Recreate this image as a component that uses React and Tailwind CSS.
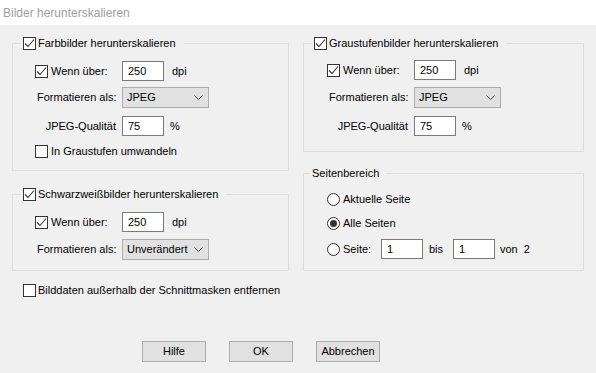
import React from 'react';

const Check = ({ checked }) => (
  <span className="w-[13px] h-[13px] border border-[#333333] bg-white flex items-center justify-center shrink-0">
    {checked && (
      <svg width="11" height="11" viewBox="0 0 11 11">
        <path d="M1 5.5 L4 8.5 L10 1.5" fill="none" stroke="#333333" strokeWidth="1.1" />
      </svg>
    )}
  </span>
);

const Radio = ({ checked }) => (
  <span className="w-[13px] h-[13px] rounded-full border border-[#333333] bg-white flex items-center justify-center shrink-0">
    {checked && <span className="w-[7px] h-[7px] rounded-full bg-[#333333]" />}
  </span>
);

const Field = ({ value, width = 'w-[42px]' }) => (
  <input
    readOnly
    value={value}
    className={`${width} h-[20px] border border-[#7a7a7a] bg-white pl-[5px] outline-none text-[11px]`}
  />
);

const Select = ({ value }) => (
  <div className="w-[87px] h-[21px] bg-[#e1e1e1] border border-[#adadad] flex items-center justify-between pl-[4px] pr-[5px]">
    <span>{value}</span>
    <svg width="9" height="6" viewBox="0 0 9 6">
      <path d="M0.5 0.5 L4.5 4.5 L8.5 0.5" fill="none" stroke="#444444" strokeWidth="1" />
    </svg>
  </div>
);

const Legend = ({ label, checked, ml = 'ml-[8px]' }) => (
  <legend className={`${ml} px-[2px]`}>
    <span className="h-[14px] flex items-center gap-[2px] pr-[6px]">
      {checked !== undefined && <Check checked={checked} />}
      <span>{label}</span>
    </span>
  </legend>
);

const WennRow = ({ pad }) => (
  <div className={`flex items-center h-[20px] ${pad}`}>
    <div className="w-[87px] flex items-center gap-[3px]">
      <Check checked />
      <span>Wenn über:</span>
    </div>
    <Field value="250" />
    <span className="ml-[8px]">dpi</span>
  </div>
);

const FormatRow = ({ pad, value, mt }) => (
  <div className={`flex items-center h-[21px] ${pad} ${mt}`}>
    <div className="w-[87px] pl-[2px]">Formatieren als:</div>
    <Select value={value} />
  </div>
);

const QualityRow = ({ pad }) => (
  <div className={`flex items-center h-[20px] mt-[8px] ${pad}`}>
    <div className="w-[87px] pr-[6px] text-right">JPEG-Qualität</div>
    <Field value="75" />
    <span className="ml-[6px]">%</span>
  </div>
);

const Button = ({ children }) => (
  <button className="w-[64px] h-[21px] bg-[#e1e1e1] border border-[#adadad] flex items-center justify-center">
    {children}
  </button>
);

export default function App() {
  return (
    <div className="w-[596px] h-[373px] bg-[#f0f0f0] flex flex-col overflow-hidden text-[11px] text-black font-['Liberation_Sans',Arial,sans-serif]">
      <div className="h-[25px] bg-white text-[12px] text-[#a0a0a0] pl-[3px] flex items-center">
        Bilder herunterskalieren
      </div>

      <div className="flex-1 px-[12px] pt-[11px]">
        <div className="flex gap-[14px]">
          {/* left column */}
          <div className="w-[278px] flex flex-col">
            <fieldset className="border border-[#dcdcdc] h-[135px]">
              <Legend label="Farbbilder herunterskalieren" checked />
              <div className="mt-[11px]">
                <WennRow pad="pl-[22px]" />
                <FormatRow pad="pl-[22px]" value="JPEG" mt="mt-[6px]" />
                <QualityRow pad="pl-[22px]" />
                <div className="flex items-center gap-[3px] h-[13px] mt-[9px] pl-[22px]">
                  <Check />
                  <span>In Graustufen umwandeln</span>
                </div>
              </div>
            </fieldset>

            <fieldset className="border border-[#dcdcdc] h-[84px] mt-[16px]">
              <Legend label="Schwarzweißbilder herunterskalieren" checked />
              <div className="mt-[11px]">
                <WennRow pad="pl-[22px]" />
                <FormatRow pad="pl-[22px]" value="Unverändert" mt="mt-[7px]" />
              </div>
            </fieldset>
          </div>

          {/* right column */}
          <div className="w-[282px] flex flex-col">
            <fieldset className="border border-[#dcdcdc] h-[116px]">
              <Legend label="Graustufenbilder herunterskalieren" checked />
              <div className="mt-[10px]">
                <WennRow pad="pl-[23px]" />
                <FormatRow pad="pl-[23px]" value="JPEG" mt="mt-[7px]" />
                <QualityRow pad="pl-[23px]" />
              </div>
            </fieldset>

            <fieldset className="border border-[#dcdcdc] h-[105px] mt-[14px]">
              <Legend label="Seitenbereich" ml="ml-[6px]" />
              <div className="mt-[9px] pl-[23px]">
                <div className="flex items-center gap-[3px] h-[20px]">
                  <Radio />
                  <span>Aktuelle Seite</span>
                </div>
                <div className="flex items-center gap-[3px] h-[20px] mt-[4px]">
                  <Radio checked />
                  <span>Alle Seiten</span>
                </div>
                <div className="flex items-center h-[20px] mt-[6px]">
                  <div className="w-[54px] flex items-center gap-[3px]">
                    <Radio />
                    <span>Seite:</span>
                  </div>
                  <Field value="1" />
                  <span className="w-[30px] pl-[6px]">bis</span>
                  <Field value="1" />
                  <span className="ml-[5px]">von</span>
                  <span className="ml-[6px]">2</span>
                </div>
              </div>
            </fieldset>
          </div>
        </div>

        <div className="flex items-center gap-[2px] mt-[13px] pl-[11px] h-[13px]">
          <Check />
          <span>Bilddaten außerhalb der Schnittmasken entfernen</span>
        </div>

        <div className="flex gap-[23px] mt-[44px] pl-[130px]">
          <Button>Hilfe</Button>
          <Button>OK</Button>
          <Button>Abbrechen</Button>
        </div>
      </div>
    </div>
  );
}
